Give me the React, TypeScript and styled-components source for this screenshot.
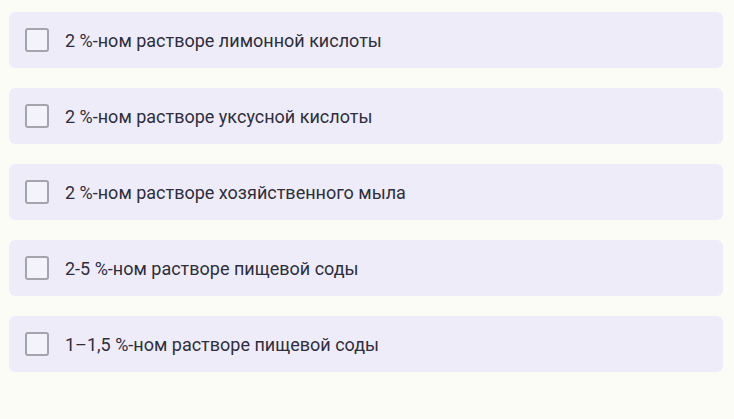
import React from 'react';
import styled, { createGlobalStyle } from 'styled-components';

const GlobalStyle = createGlobalStyle`
    html, body {
        margin: 0;
        padding: 0;
        background: #fcfcf7;
        font-family: Roboto, "Noto Sans", sans-serif;
    }
`;

const List = styled.div`
    display: flex;
    flex-direction: column;
    gap: 20px;
    padding: 12px 11px 12px 9px;
`;

const Option = styled.label`
    display: flex;
    align-items: center;
    gap: 16px;
    height: 56px;
    padding: 0 16px;
    box-sizing: border-box;
    background: #efecfa;
    border-radius: 6px;
    cursor: pointer;
`;

const Box = styled.span`
    width: 24px;
    height: 24px;
    box-sizing: border-box;
    border: 2px solid #a4a4ae;
    border-radius: 3px;
    background: #f4f2fb;
    flex-shrink: 0;
`;

const Label = styled.span`
    font-size: 18px;
    color: #2e2e3c;
`;

const options = [
    '2 %-ном растворе лимонной кислоты',
    '2 %-ном растворе уксусной кислоты',
    '2 %-ном растворе хозяйственного мыла',
    '2-5 %-ном растворе пищевой соды',
    '1–1,5 %-ном растворе пищевой соды',
];

const App: React.FC = () => {
    return (
        <>
            <GlobalStyle />
            <List>
                {options.map((text) => (
                    <Option key={text}>
                        <Box />
                        <Label>{text}</Label>
                    </Option>
                ))}
            </List>
        </>
    );
};

export default App;
